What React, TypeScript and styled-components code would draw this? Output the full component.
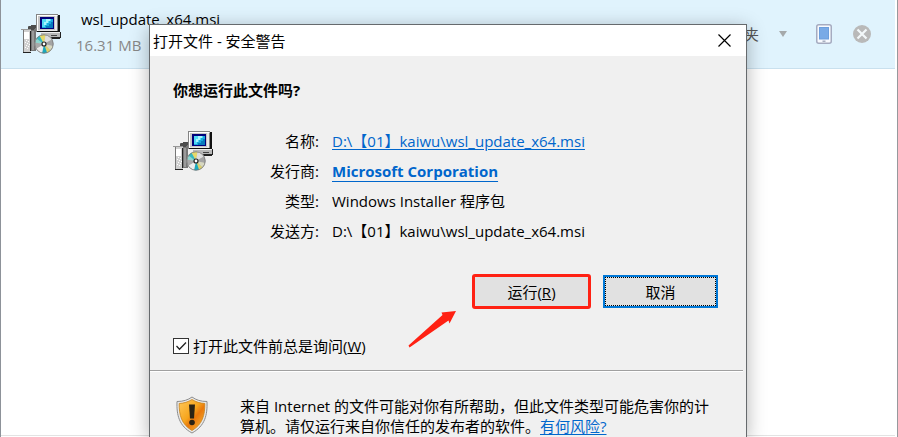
import React from "react";
import styled, { createGlobalStyle, css } from "styled-components";

const Global = createGlobalStyle`
  * { box-sizing: border-box; }
  html, body, #root { height: 100%; margin: 0; }
  body {
    overflow: hidden;
    background: #fff;
    color: #000;
    font-family: "Open Sans", "Noto Sans CJK SC", sans-serif;
    font-size: 15px;
    line-height: 20px;
  }
  button { font: inherit; color: inherit; padding: 0; }
`;

const Page = styled.div`
  position: relative;
  height: 100%;
  display: flex;
  flex-direction: column;
  padding: 0 2px 1px 0;
  border-left: 1px solid #8d9299;
  border-right: 1px solid #96999d;
  overflow: hidden;
`;

const DownloadRow = styled.header`
  flex: none;
  display: flex;
  align-items: flex-start;
  height: 69px;
  padding: 0 24px 0 20px;
  background: #e0f3fd;
  border-bottom: 1px solid #c9e0ee;
`;

const DownloadIcon = styled.div`
  display: flex;
  padding-top: 14px;
  margin-right: 15px;
`;

const FileInfo = styled.div`
  flex: 1;
  min-width: 0;
  padding-top: 9px;
`;

const FileName = styled.div`
  padding-left: 5px;
  line-height: 20px;
`;

const FileSize = styled.div`
  margin-top: 6px;
  color: #888;
`;

const RowTools = styled.div`
  display: flex;
  align-items: center;
  height: 67px;
`;

const ToolButton = styled.button<{ $gap?: number }>`
  display: flex;
  align-items: center;
  margin-left: ${(p) => p.$gap ?? 0}px;
  border: 0;
  background: none;
  color: #555;
`;

const ListArea = styled.main`
  flex: 1;
  border-bottom: 1px solid #e3e3e3;
`;

const Overlay = styled.div`
  position: absolute;
  inset: 0;
  display: flex;
  padding: 24px 150px 0 148px;
`;

const Dialog = styled.section`
  flex: 1;
  min-width: 0;
  display: flex;
  flex-direction: column;
  background: #f0f0f0;
  border: 1px solid #666a6d;
  border-bottom: 0;
  box-shadow: 0 4px 18px rgba(0, 0, 0, 0.3);
`;

const TitleBar = styled.div`
  flex: none;
  display: flex;
  align-items: center;
  justify-content: space-between;
  height: 31px;
  padding: 0 15px 0 3px;
  background: #fff;
`;

const Title = styled.h1`
  margin: 0;
  font-size: 15px;
  font-weight: 400;
`;

const CloseButton = styled.button`
  display: flex;
  border: 0;
  background: none;
`;

const Body = styled.div`
  flex: none;
  padding: 24px 28px 14px 23px;
`;

const Question = styled.h2`
  margin: 0;
  font-size: 15px;
  line-height: 20px;
  font-weight: 700;
`;

const Summary = styled.div`
  display: flex;
  margin-top: 26px;
`;

const SummaryIcon = styled.div`
  width: 72px;
  padding-top: 5px;
`;

const Details = styled.dl`
  flex: 1;
  display: grid;
  grid-template-columns: 74px 1fr;
  column-gap: 13px;
  grid-auto-rows: 30px;
  margin: 0;
  line-height: 30px;
  white-space: nowrap;

  dt { text-align: right; }
  dd { margin: 0; }
`;

const Link = styled.a<{ $strong?: boolean }>`
  color: #0066cc;
  text-decoration-thickness: 1px;
  text-underline-offset: 2px;
  ${(p) =>
    p.$strong &&
    css`
      font-weight: 700;
      text-underline-offset: 4px;
    `}
`;

const Actions = styled.div`
  display: flex;
  justify-content: flex-end;
  align-items: center;
  gap: 12px;
  margin-top: 28px;
`;

const ActionButton = styled.button<{ $kind: "marked" | "focused" }>`
  background: #e1e1e1;
  ${(p) =>
    p.$kind === "marked"
      ? css`
          width: 119px;
          height: 35px;
          border: 3px solid #ff2113;
          border-radius: 3px;
        `
      : css`
          width: 115px;
          height: 33px;
          border: 2px solid #0078d7;
          outline: 1px dotted #000;
          outline-offset: -3px;
        `}
`;

const AskRow = styled.div`
  display: flex;
  align-items: flex-end;
  height: 47px;
`;

const AskLabel = styled.label`
  display: flex;
  align-items: center;
  gap: 4px;
`;

const Check = styled.input`
  appearance: none;
  width: 16px;
  height: 16px;
  margin: 0;
  border: 1px solid #333;
  background: #fff;
  &:checked {
    background: #fff url("data:image/svg+xml,%3Csvg xmlns='http://www.w3.org/2000/svg' viewBox='0 0 14 14'%3E%3Cpath d='M2.5 7 5.5 10.3 12 3.5' fill='none' stroke='%23222' stroke-width='1.3'/%3E%3C/svg%3E") center / 14px no-repeat;
  }
`;

const PointerArrow = styled.svg`
  margin-left: 42px;
`;

const Divider = styled.hr`
  flex: none;
  margin: 0 3px 0 0;
  border: 0;
  border-top: 1px solid #a0a0a0;
  border-bottom: 1px solid #fff;
`;

const Warning = styled.div`
  flex: none;
  display: flex;
  gap: 32px;
  padding: 24px 28px 0 26px;
`;

const WarningText = styled.p`
  flex: 1;
  margin: 0;
`;

function InstallerIcon() {
  return (
    <svg width="40" height="40" viewBox="0 0 40 40" shapeRendering="crispEdges" aria-hidden="true">
      <path d="M15 0h22v18H15z" fill="#c6c6c6" />
      <path d="M15 0h22v1H15zM15 0h1v18h-1z" fill="#848484" />
      <path d="M16 1h20v1H17v15h-1z" fill="#fff" />
      <path d="M34 2h2v15H17v-1h17z" fill="#e8e8e8" />
      <path d="M37 1h2v17h-2zM16 17h21v1H16z" fill="#111" />
      <path d="M36 2h1v15h-1z" fill="#848484" />
      <path d="M19 3h14v12H19z" fill="#00007b" />
      <path d="M21 5h11v9H21z" fill="#19a9df" />
      <path d="M21 5h9v2h-2v2h-2v2h-2v2h-3z" fill="#50d9f5" />
      <path d="M25 5h4v2h-2v2h-2v2h-2V8h2z" fill="#a7f3ff" />
      <path d="M30 8h2v6h-7v-2h3v-2h2z" fill="#087abd" />
      <path d="M20 18h20v5H20z" fill="#b8b8b8" />
      <path d="M20 18h19v1H20z" fill="#eee" />
      <path d="M39 18h1v6h-1zM30 23h9v2h-9z" fill="#222" />
      <path d="M30 21h6v1h-6z" fill="#444" />
      <path d="M7 12h8v25H7z" fill="#777" />
      <path d="M8 12l3-1h4v2l-3 3H0v-1h7z" fill="#4c4c4c" />
      <path d="M0 15h10v1H0z" fill="#999" />
      <path d="M2 16h8v23H2z" fill="#d0d0d0" />
      <path d="M2 16h1v23H2z" fill="#777" />
      <path d="M3 18h5v7H3z" fill="#fff" />
      <path d="M5 26h1v1H5zM7 27h1v1H7zM4 28h1v1H4zM6 29h1v1H6zM8 30h1v1H8zM5 31h1v1H5zM7 32h1v1H7zM4 33h1v1H4zM6 34h1v1H6z" fill="#fff" />
      <path d="M9 17h1v20H9zM2 38h8v1H2z" fill="#222" />
      <path d="M11 17h2v19h-2z" fill="#9b9b9b" />
      <g shapeRendering="geometricPrecision">
        <circle cx="23" cy="30" r="9.500" fill="#b5b5b5" />
        <path d="M23 30 18.500 21.800A9.300 9.300 0 0 1 24.500 20.800z" fill="#e6d96a" />
        <path d="M23 30 24.500 20.800A9.300 9.300 0 0 1 31 25.500z" fill="#dedede" />
        <path d="M23 30 31 25.500A9.300 9.300 0 0 1 32 32z" fill="#a4a4a4" />
        <path d="M23 30 32 32A9.300 9.300 0 0 1 29.500 36.600z" fill="#d8d8c0" />
        <path d="M23 30 29.500 36.600A9.300 9.300 0 0 1 26 38.800z" fill="#dbd06c" />
        <path d="M23 30 26 38.800A9.300 9.300 0 0 1 21 39z" fill="#19a9bd" />
        <path d="M23 30 21 39A9.300 9.300 0 0 1 15 34.800z" fill="#ececec" />
        <path d="M23 30 15 34.800A9.300 9.300 0 0 1 13.800 28.500z" fill="#a9a9a9" />
        <path d="M23 30 13.800 28.500A9.300 9.300 0 0 1 15.500 24.500z" fill="#8ed6cf" />
        <path d="M23 30 15.500 24.500A9.300 9.300 0 0 1 18.500 21.800z" fill="#32b9c2" />
        <circle cx="23" cy="30" r="9.200" fill="none" stroke="#777" strokeWidth="0.800" />
        <circle cx="23" cy="30" r="2" fill="#fff" stroke="#222" strokeWidth="1.200" />
      </g>
    </svg>
  );
}

function PhoneIcon() {
  return (
    <svg width="16" height="20" viewBox="0 0 16 20" aria-hidden="true">
      <rect x="0.75" y="0.75" width="14.5" height="18.5" rx="2" fill="#f8faff" stroke="#a5abc0" strokeWidth="1.5" />
      <rect x="3.500" y="3.500" width="9" height="11.500" fill="#79aae6" stroke="#6c9edc" />
      <path d="M6.500 17.200h3" stroke="#9aa2b5" strokeWidth="1.300" />
    </svg>
  );
}

function ShieldIcon() {
  return (
    <svg width="32" height="38" viewBox="0 0 32 38" aria-hidden="true">
      <defs>
        <linearGradient id="amber" x1="0" y1="0" x2="1" y2="1">
          <stop offset="0" stopColor="#ffc95c" />
          <stop offset="0.45" stopColor="#f6a51d" />
          <stop offset="0.6" stopColor="#e9780c" />
          <stop offset="1" stopColor="#fbbf3a" />
        </linearGradient>
      </defs>
      <path d="M16 1c4 3 9 4.500 15 4.500C31.500 19 29 30 16 37 3 30 .5 19 1 5.500 7 5.500 12 4 16 1z" fill="#e9e9e9" stroke="#8d8d8d" />
      <path d="M16 3.500c4 2.500 8 3.700 12.800 4C29 19 26.500 28.500 16 34.500 5.500 28.500 3 19 3.200 7.500c4.800-.3 8.800-1.500 12.800-4z" fill="url(#amber)" stroke="#c98118" strokeWidth="0.800" />
      <path d="M13 8.500h6l-1 14h-4z" fill="#2b2314" />
      <circle cx="16" cy="26.500" r="2.800" fill="#2b2314" />
    </svg>
  );
}

export default function App() {
  return (
    <>
      <Global />
      <Page>
        <DownloadRow>
          <DownloadIcon><InstallerIcon /></DownloadIcon>
          <FileInfo>
            <FileName>wsl_update_x64.msi</FileName>
            <FileSize>16.31 MB</FileSize>
          </FileInfo>
          <RowTools>
            <ToolButton type="button">文件夹</ToolButton>
            <ToolButton type="button" $gap={20} aria-label="More">
              <svg width="8" height="6" viewBox="0 0 8 6"><path d="M0 0h8L4 6z" fill="#a5a9ab" /></svg>
            </ToolButton>
            <ToolButton type="button" $gap={29} aria-label="Send to phone"><PhoneIcon /></ToolButton>
            <ToolButton type="button" $gap={21} aria-label="Remove">
              <svg width="18" height="18" viewBox="0 0 18 18">
                <circle cx="9" cy="9" r="9" fill="#b9b9b9" />
                <path d="M4.500 4.500l9 9M13.500 4.500l-9 9" stroke="#f3f8fa" strokeWidth="2.200" />
              </svg>
            </ToolButton>
          </RowTools>
        </DownloadRow>
        <ListArea />
        <Overlay>
          <Dialog role="dialog" aria-labelledby="dialog-title">
            <TitleBar>
              <Title id="dialog-title">打开文件 - 安全警告</Title>
              <CloseButton type="button" aria-label="Close">
                <svg width="13" height="13" viewBox="0 0 13 13"><path d="M.5.5l12 12M12.500.5l-12 12" stroke="#000" strokeWidth="1.200" /></svg>
              </CloseButton>
            </TitleBar>
            <Body>
              <Question>你想运行此文件吗?</Question>
              <Summary>
                <SummaryIcon><InstallerIcon /></SummaryIcon>
                <Details>
                  <dt>名称:</dt>
                  <dd><Link href="#file">D:\【01】kaiwu\wsl_update_x64.msi</Link></dd>
                  <dt>发行商:</dt>
                  <dd><Link href="#publisher" $strong>Microsoft Corporation</Link></dd>
                  <dt>类型:</dt>
                  <dd>Windows Installer 程序包</dd>
                  <dt>发送方:</dt>
                  <dd>D:\【01】kaiwu\wsl_update_x64.msi</dd>
                </Details>
              </Summary>
              <Actions>
                <ActionButton type="button" $kind="marked">运行(<u>R</u>)</ActionButton>
                <ActionButton type="button" $kind="focused">取消</ActionButton>
              </Actions>
              <AskRow>
                <AskLabel>
                  <Check type="checkbox" defaultChecked />
                  <span>打开此文件前总是询问(<u>W</u>)</span>
                </AskLabel>
                <PointerArrow width="50" height="47" viewBox="0 0 50 47" aria-hidden="true">
                  <path d="M.5 36.500 34.500 6l-1-2.500L48 2l-6.500 12.500-1-3L1.500 38.500z" fill="#ff2113" />
                </PointerArrow>
              </AskRow>
            </Body>
            <Divider />
            <Warning>
              <ShieldIcon />
              <WarningText>
                来自 Internet 的文件可能对你有所帮助，但此文件类型可能危害你的计算机。请仅运行来自你信任的发布者的软件。<Link href="#risk">有何风险?</Link>
              </WarningText>
            </Warning>
          </Dialog>
        </Overlay>
      </Page>
    </>
  );
}
